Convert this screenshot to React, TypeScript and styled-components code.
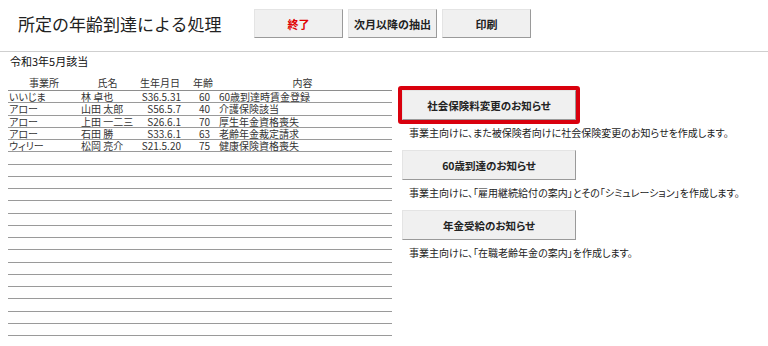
import styled, { createGlobalStyle } from "styled-components";

type Row = [string, string, string, string, string];

const rows: Row[] = [
  ["いいじま", "林 卓也", "S36.5.31", "60", "60歳到達時賃金登録"],
  ["アロー", "山田 太郎", "S56.5.7", "40", "介護保険該当"],
  ["アロー", "上田 一二三", "S26.6.1", "70", "厚生年金資格喪失"],
  ["アロー", "石田 勝", "S33.6.1", "63", "老齢年金裁定請求"],
  ["ウィリー", "松岡 亮介", "S21.5.20", "75", "健康保険資格喪失"],
];

const EMPTY_ROWS = 15;

const notices = [
  {
    label: "社会保険料変更のお知らせ",
    text: "事業主向けに、また被保険者向けに社会保険変更のお知らせを作成します。",
    active: true,
  },
  {
    label: "60歳到達のお知らせ",
    text: "事業主向けに、「雇用継続給付の案内」とその「シミュレーション」を作成します。",
    active: false,
  },
  {
    label: "年金受給のお知らせ",
    text: "事業主向けに、「在職老齢年金の案内」を作成します。",
    active: false,
  },
];

function App() {
  return (
    <>
      <GlobalStyle />
      <Page>
        <Header>
          <Title>所定の年齢到達による処理</Title>
          <Toolbar>
            <ToolButton $danger>終了</ToolButton>
            <ToolButton>次月以降の抽出</ToolButton>
            <ToolButton>印刷</ToolButton>
          </Toolbar>
        </Header>
        <Body>
          <ListPane>
            <Period>令和3年5月該当</Period>
            <Sheet>
              <HeadRow>
                <HeadCell>事業所</HeadCell>
                <HeadCell>氏名</HeadCell>
                <HeadCell>生年月日</HeadCell>
                <HeadCell $align="end">年齢</HeadCell>
                <HeadCell>内容</HeadCell>
              </HeadRow>
              {rows.map((r, i) => (
                <SheetRow key={i}>
                  <Cell>{r[0]}</Cell>
                  <Cell>{r[1]}</Cell>
                  <Cell $align="end" $pad={4}>
                    {r[2]}
                  </Cell>
                  <Cell $align="end" $pad={3}>
                    {r[3]}
                  </Cell>
                  <Cell $indent={6}>{r[4]}</Cell>
                </SheetRow>
              ))}
              {Array.from({ length: EMPTY_ROWS }).map((_, i) => (
                <SheetRow key={"e" + i} />
              ))}
            </Sheet>
          </ListPane>
          <ActionPane>
            {notices.map((n) => (
              <Notice key={n.label}>
                <ButtonSlot>
                  <NoticeButton>{n.label}</NoticeButton>
                  {n.active && <Highlight />}
                </ButtonSlot>
                <NoticeText>{n.text}</NoticeText>
              </Notice>
            ))}
          </ActionPane>
        </Body>
      </Page>
    </>
  );
}

const GlobalStyle = createGlobalStyle`
  html, body {
    margin: 0;
    padding: 0;
    background: #fff;
  }
  body {
    font-family: "Noto Sans CJK JP", "Noto Sans", sans-serif;
    color: #222;
  }
`;

const Page = styled.div`
  width: 768px;
  height: 346px;
  overflow: hidden;
  background: #fff;
`;

const Header = styled.header`
  display: flex;
  align-items: center;
  height: 52px;
  box-sizing: border-box;
  padding: 0 0 4px 18px;
  border-bottom: 1px solid #cfcfcf;
`;

const Title = styled.h1`
  width: 236px;
  margin: 0;
  font-size: 17px;
  font-weight: 400;
  color: #222;
  white-space: nowrap;
`;

const Toolbar = styled.div`
  display: flex;
  gap: 5px;
`;

const ToolButton = styled.button<{ $danger?: boolean }>`
  width: 89px;
  height: 29px;
  padding: 0;
  background: #f0f0f0;
  border: 1px solid;
  border-color: #e4e4e4 #9a9a9a #9a9a9a #e4e4e4;
  font-family: inherit;
  font-size: 11px;
  font-weight: 700;
  font-feature-settings: "palt";
  color: ${(p) => (p.$danger ? "#e00000" : "#222")};
`;

const Body = styled.div`
  display: flex;
  gap: 10px;
`;

const ListPane = styled.section`
  flex: 0 0 auto;
  width: 384px;
  padding-left: 8px;
`;

const Period = styled.div`
  height: 14px;
  padding: 2px 0 0 2px;
  font-size: 11px;
  line-height: 14px;
  color: #111;
`;

const Sheet = styled.div`
  margin-top: 8px;
  font-size: 10px;
  font-feature-settings: "palt";
  color: #333;
`;

const columns = "72px 55px 50px 28px 1fr";

const HeadRow = styled.div`
  display: grid;
  grid-template-columns: ${columns};
  height: 14px;
  line-height: 13px;
  border-bottom: 1px solid #8e8e8e;
`;

const HeadCell = styled.div<{ $align?: "center" | "end" }>`
  text-align: ${(p) => (p.$align === "end" ? "right" : "center")};
  white-space: nowrap;
`;

const SheetRow = styled.div`
  display: grid;
  grid-template-columns: ${columns};
  box-sizing: border-box;
  height: 12.25px;
  line-height: 11px;
  border-bottom: 1px solid #9a9a9a;
`;

const Cell = styled.div<{ $align?: "end"; $pad?: number; $indent?: number }>`
  text-align: ${(p) => (p.$align === "end" ? "right" : "left")};
  padding-right: ${(p) => p.$pad ?? 0}px;
  padding-left: ${(p) => p.$indent ?? 1}px;
  white-space: nowrap;
`;

const ActionPane = styled.section`
  display: flex;
  flex-direction: column;
  gap: 10px;
  padding-top: 38px;
`;

const Notice = styled.div`
  display: flex;
  flex-direction: column;
  gap: 6px;
`;

const ButtonSlot = styled.div`
  position: relative;
  width: 174px;
`;

const NoticeButton = styled.button`
  display: block;
  width: 174px;
  height: 30px;
  padding: 0;
  background: #f0f0f0;
  border: 1px solid;
  border-color: #e4e4e4 #9a9a9a #9a9a9a #e4e4e4;
  font-family: inherit;
  font-size: 10.5px;
  font-weight: 700;
  font-feature-settings: "palt";
  color: #222;
`;

const Highlight = styled.span`
  position: absolute;
  inset: -4px;
  border: 4px solid #d9000d;
  border-radius: 3px;
  pointer-events: none;
`;

const NoticeText = styled.div`
  padding-left: 7px;
  font-size: 10px;
  line-height: 14px;
  font-feature-settings: "palt";
  color: #222;
  white-space: nowrap;
`;

export default App;
